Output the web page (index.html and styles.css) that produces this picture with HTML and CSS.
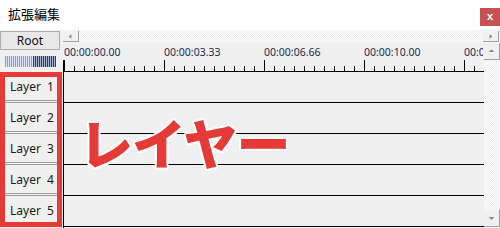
FILE: index.html
```html
<!DOCTYPE html>
<html lang="ja">
<head>
<meta charset="utf-8">
<link rel="stylesheet" href="styles.css">
</head>
<body>
<div class="window">
  <div class="titlebar">
    <span class="title">拡張編集</span>
    <span class="close">x</span>
  </div>
  <div class="editor">
    <div class="left-top">
      <div class="root-btn">Root</div>
      <div class="stripes"><span class="light"></span><span class="dark"></span></div>
    </div>
    <div class="hscroll">
      <div class="arrow-btn"><svg width="16" height="11" viewBox="0 0 16 11"><path d="M6 5.5 L9 3 L9 8 Z" fill="#888"/></svg></div>
      <div class="arrow-btn"><svg width="16" height="11" viewBox="0 0 16 11"><path d="M10 5.5 L7 3 L7 8 Z" fill="#888"/></svg></div>
    </div>
    <div class="ruler">
      <div class="times">
        <span>00:00:00.00</span><span>00:00:03.33</span><span>00:00:06.66</span><span>00:00:10.00</span><span class="cut">00:0</span>
      </div>
      <svg class="ticks" width="422" height="29" viewBox="0 0 422 29">
        <path d="M1.5 17 V29" stroke="#000" stroke-width="1"/>
        <g stroke="#000" stroke-width="1" fill="none" id="t"></g>
      </svg>
    </div>
    <div class="vscroll">
      <div class="varrow"><svg width="16" height="16" viewBox="0 0 16 16"><path d="M8 6 L5 9 L11 9 Z" fill="#888"/></svg></div>
      <div class="varrow"><svg width="16" height="16" viewBox="0 0 16 16"><path d="M8 10 L5 7 L11 7 Z" fill="#888"/></svg></div>
    </div>
    <div class="layers">
      <div class="layer">Layer&nbsp;&nbsp;1</div>
      <div class="layer">Layer&nbsp;&nbsp;2</div>
      <div class="layer">Layer&nbsp;&nbsp;3</div>
      <div class="layer">Layer&nbsp;&nbsp;4</div>
      <div class="layer">Layer&nbsp;&nbsp;5</div>
    </div>
    <div class="tracks">
      <div class="track"></div>
      <div class="track"></div>
      <div class="track"></div>
      <div class="track"></div>
      <div class="track"></div>
    </div>
    <div class="highlight"></div>
    <div class="caption">レイヤー</div>
  </div>
</div>
<script src="script.js"></script>
</body>
</html>
```

FILE: script.js
```js
(function () {
  var g = document.getElementById('t');
  var d = 'M1.5 28.5 H422 ';
  for (var x = 2; x < 422; x += 10) {
    var major = ((x - 2) % 100) === 0;
    d += 'M' + (x + 0.5) + ' ' + (major ? 17 : 23) + ' V28 ';
  }
  var p = document.createElementNS('http://www.w3.org/2000/svg', 'path');
  p.setAttribute('d', d);
  g.appendChild(p);
})();
```

FILE: styles.css
```css
html, body {
  margin: 0;
  padding: 0;
  background: #ffffff;
}
body {
  width: 500px;
  height: 228px;
  overflow: hidden;
  font-family: "Noto Sans", "Noto Sans CJK JP", sans-serif;
}
.window {
  width: 500px;
  height: 228px;
  display: flex;
  flex-direction: column;
}
.titlebar {
  height: 30px;
  background: #ffffff;
  display: flex;
  align-items: flex-start;
  justify-content: space-between;
}
.title {
  font-family: "Noto Sans CJK JP", sans-serif;
  font-size: 13px;
  line-height: 16px;
  margin: 6px 0 0 8px;
  color: #000;
}
.close {
  width: 20px;
  height: 18px;
  margin-top: 8px;
  background: #c75050;
  color: #fff;
  font-family: "Liberation Sans", sans-serif;
  font-size: 11px;
  font-weight: bold;
  line-height: 17px;
  text-align: center;
}
.editor {
  position: relative;
  flex: 1;
  display: grid;
  grid-template-columns: 62px 422px 16px;
  grid-template-rows: 13px 29px 1fr;
  background: #f0f0f0;
}
.left-top {
  grid-column: 1;
  grid-row: 1 / 3;
  background: #f0f0f0;
  display: flex;
  flex-direction: column;
  padding-top: 1px;
}
.root-btn {
  width: 58px;
  height: 17px;
  border: 1px solid #adadad;
  background: #e8e8e8;
  font-size: 12px;
  line-height: 17px;
  text-align: center;
  color: #111;
}
.stripes {
  display: flex;
  margin: 6px 0 0 5px;
  height: 11px;
  width: 51px;
}
.stripes .light {
  width: 28px;
  background: repeating-linear-gradient(90deg, #7f9fd6 0 1px, #dce6f6 1px 2px);
}
.stripes .dark {
  width: 23px;
  background: repeating-linear-gradient(90deg, #2e3f6c 0 1px, #a7b3cf 1px 2px);
}
.hscroll {
  grid-column: 2 / 4;
  grid-row: 1;
  background: repeating-conic-gradient(#ffffff 0 25%, #ececec 0 50%) 0 0 / 2px 2px;
  display: flex;
  justify-content: space-between;
  align-items: flex-start;
  padding: 1px 1px 0 1px;
}
.arrow-btn {
  width: 16px;
  height: 11px;
  background: #f0f0f0;
  border-right: 1px solid #a0a0a0;
  border-bottom: 1px solid #a0a0a0;
  box-sizing: border-box;
  display: flex;
}
.ruler {
  grid-column: 2;
  grid-row: 2;
  background: #f0f0f0;
  display: flex;
  flex-direction: column;
  overflow: hidden;
}
.times {
  height: 0;
  display: flex;
  align-items: flex-start;
  padding-left: 2px;
  font-family: "Noto Sans", sans-serif;
  font-size: 10.5px;
  line-height: 14px;
  color: #1d2850;
  white-space: nowrap;
}
.times span {
  flex: 0 0 100px;
  margin-top: 2px;
}
.times .cut {
  flex: 0 0 19px;
  height: 14px;
  overflow: hidden;
}
.ticks {
  display: block;
}
.vscroll {
  grid-column: 3;
  grid-row: 2 / 4;
  background: repeating-conic-gradient(#ffffff 0 25%, #ececec 0 50%) 0 0 / 2px 2px;
  display: flex;
  flex-direction: column;
  justify-content: space-between;
  padding-bottom: 1px;
}
.varrow {
  width: 16px;
  height: 17px;
  background: #f0f0f0;
  border-right: 1px solid #a0a0a0;
  border-bottom: 1px solid #a0a0a0;
  box-sizing: border-box;
  display: flex;
}
.layers {
  grid-column: 1;
  grid-row: 3;
  display: flex;
  flex-direction: column;
  background: #f0f0f0;
}
.layer {
  height: 31px;
  box-sizing: border-box;
  border-bottom: 3px double #a0a0a0;
  padding-top: 2px;
  padding-left: 2px;
  font-size: 12px;
  line-height: 26px;
  text-align: center;
  color: #1a1a1a;
}
.tracks {
  grid-column: 2;
  grid-row: 3;
  border-left: 1px solid #000;
  margin-left: 1px;
  display: flex;
  flex-direction: column;
}
.track {
  height: 30px;
  border-bottom: 1px solid #000;
  flex: 0 0 auto;
}
.highlight {
  position: absolute;
  left: 0;
  top: 42px;
  width: 62px;
  height: 155px;
  box-sizing: border-box;
  border: 5px solid #e53a36;
}
.caption {
  position: absolute;
  left: 79px;
  top: 82px;
  font-family: "Noto Sans CJK JP", sans-serif;
  font-weight: 900;
  font-size: 54px;
  line-height: 60px;
  color: #e53a36;
  letter-spacing: -1px;
  text-shadow: 2px 0 0 #fff, -2px 0 0 #fff, 0 2px 0 #fff, 0 -2px 0 #fff, 1.5px 1.5px 0 #fff, -1.5px 1.5px 0 #fff, 1.5px -1.5px 0 #fff, -1.5px -1.5px 0 #fff;
}
```
